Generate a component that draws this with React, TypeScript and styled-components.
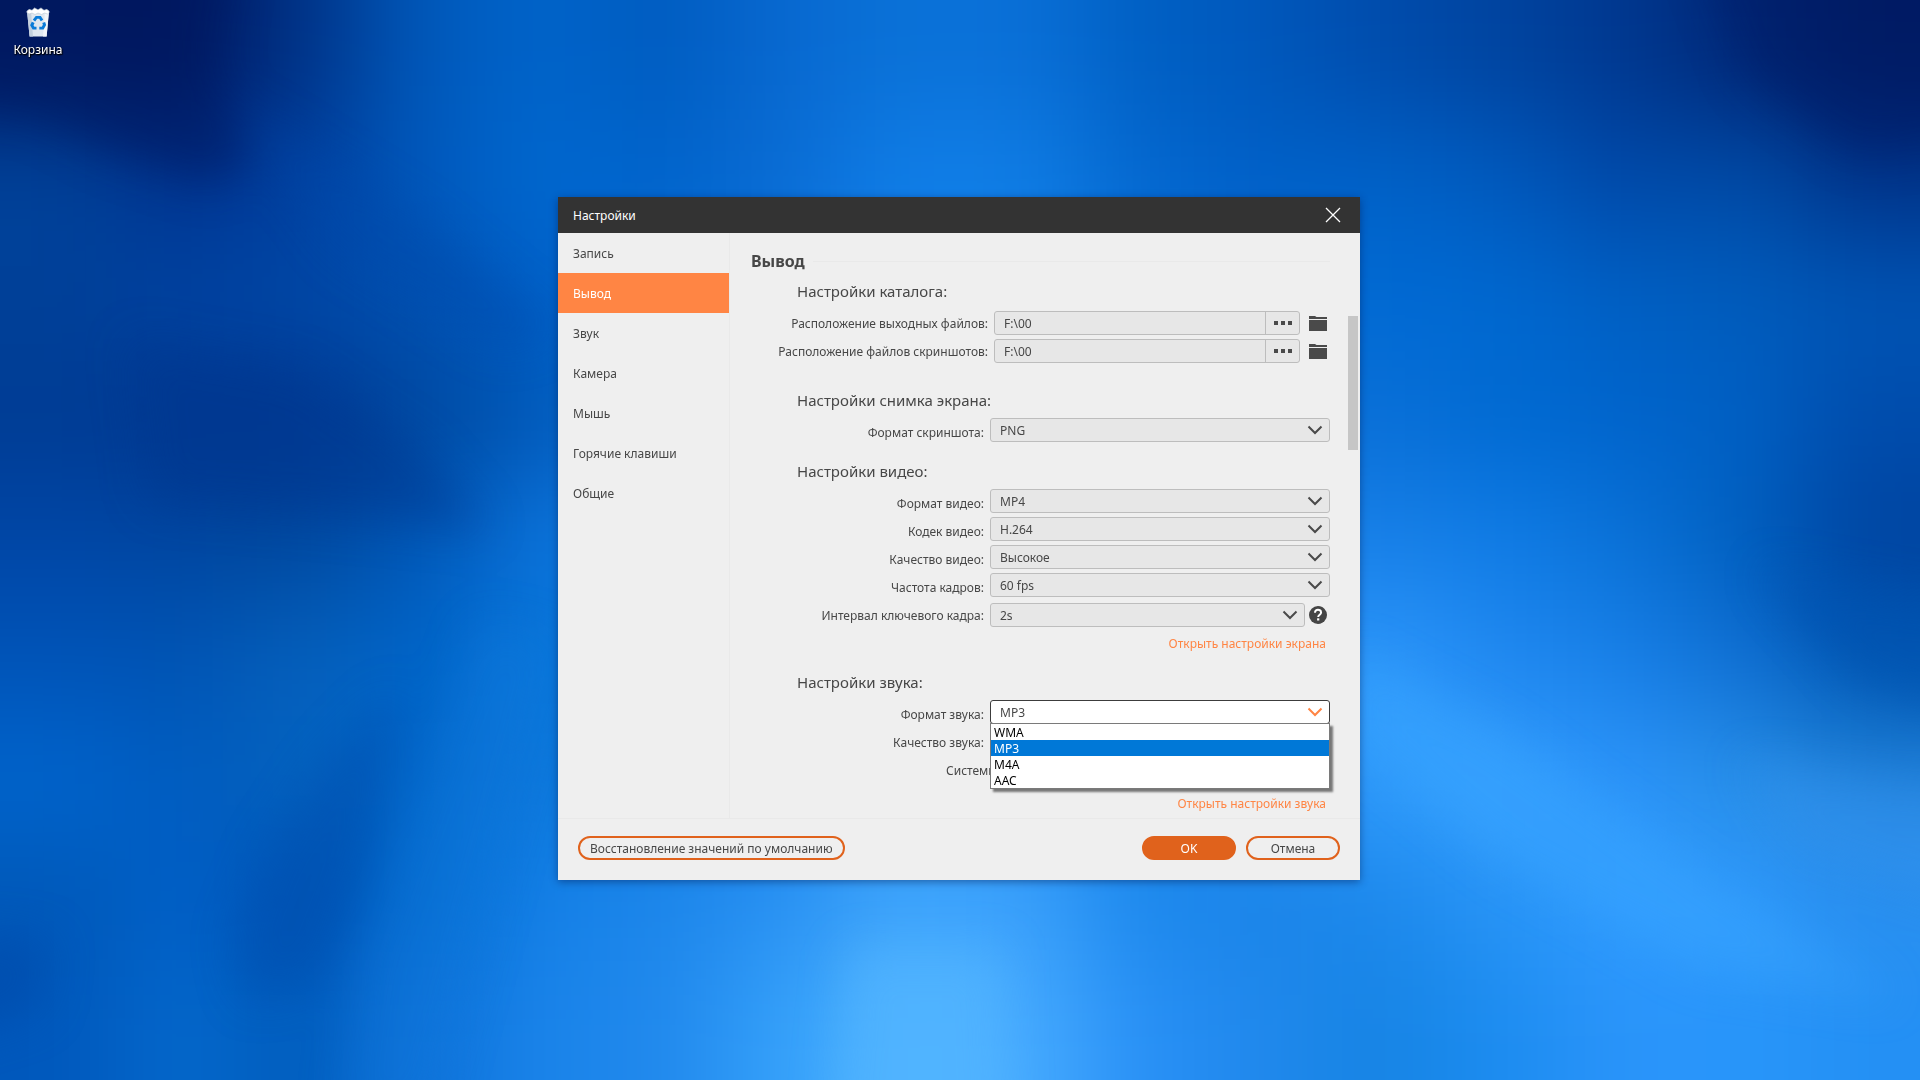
import React, { useId, useState } from "react";
import styled, { createGlobalStyle, css } from "styled-components";

const colors = {
  window: "#efefef",
  titleBar: "#333333",
  text: "#474747",
  accent: "#ff8544",
  accentStrong: "#e0621c",
  field: "#e7e7e7",
  fieldBorder: "#bdbdbd",
  line: "#e9e9e9",
  icon: "#4a4a4a",
};

const fontStack = `"Noto Sans", "Open Sans", sans-serif`;

const GlobalStyle = createGlobalStyle`
  *, *::before, *::after { box-sizing: border-box; }
  html, body { margin: 0; }
  body { background: #0a62cc; color: ${colors.text}; font: 12px/16px ${fontStack}; }
  button, input, select { font: inherit; color: inherit; margin: 0; }
`;

const Desktop = styled.main`
  position: relative;
  isolation: isolate;
  overflow: hidden;
  min-height: 100vh;
  display: grid;
  place-items: center;
  padding: 0 2px 3px 0;
`;

const WallpaperSvg = styled.svg`
  position: absolute;
  inset: 0;
  z-index: -1;
  width: 100%;
  height: 100%;
`;

const Shortcut = styled.button`
  position: absolute;
  top: 6px;
  left: 0;
  width: 76px;
  padding: 0;
  border: 0;
  background: none;
  display: flex;
  flex-direction: column;
  align-items: center;
  gap: 4px;
  color: #fff;
  text-shadow: 0 1px 2px #000, 1px 1px 1px #000;
`;

const Dialog = styled.section`
  width: min(802px, 100%);
  display: flex;
  flex-direction: column;
  background: ${colors.window};
  box-shadow: 0 2px 8px rgba(0, 20, 70, 0.45);
`;

const TitleBar = styled.header`
  height: 36px;
  padding: 0 17px 0 15px;
  display: flex;
  align-items: center;
  justify-content: space-between;
  background: ${colors.titleBar};
  color: #fff;
`;

const WindowTitle = styled.h1`
  margin: 0;
  padding-top: 2px;
  font-size: 12px;
  line-height: 16px;
  font-weight: 400;
`;

const IconButton = styled.button`
  padding: 0;
  border: 0;
  background: none;
  display: flex;
  cursor: pointer;
`;

const Body = styled.div`
  display: flex;
`;

const Sidebar = styled.nav`
  flex: none;
  width: 172px;
  border-right: 1px solid ${colors.line};
  display: flex;
  flex-direction: column;
`;

const NavItem = styled.button<{ $active: boolean }>`
  height: 40px;
  padding: 2px 15px 0;
  border: 0;
  text-align: left;
  background: ${(p) => (p.$active ? colors.accent : "transparent")};
  color: ${(p) => (p.$active ? "#fff" : colors.text)};
`;

const Panel = styled.div`
  flex: 1;
  min-width: 0;
  padding: 16px 18px 6px 21px;
`;

const PanelHeading = styled.div`
  display: flex;
  align-items: center;
  gap: 8px;
  margin-bottom: 6px;

  &::after {
    content: "";
    flex: 1;
    border-top: 1px solid ${colors.line};
  }
`;

const PanelTitle = styled.h2`
  margin: 0;
  font-size: 16px;
  line-height: 24px;
`;

const Section = styled.section<{ $spaceAbove?: number; $titleGap?: number }>`
  display: flex;
  flex-direction: column;
  gap: 4px;
  margin-top: ${(p) => p.$spaceAbove ?? 0}px;

  > h3 {
    margin: 0 0 ${(p) => p.$titleGap ?? 2}px;
    padding-left: 46px;
    font-size: 15px;
    line-height: 24px;
    font-weight: 400;
  }
`;

const FieldRow = styled.div<{ $wide?: boolean; $spaced?: boolean }>`
  display: grid;
  grid-template-columns: ${(p) => (p.$wide ? 237 : 233)}px 1fr;
  column-gap: 6px;
  align-items: center;
  min-height: 24px;
  margin-top: ${(p) => (p.$spaced ? 2 : 0)}px;
`;

const FieldLabel = styled.label<{ $lowered?: boolean; $start?: number }>`
  text-align: ${(p) => (p.$start ? "left" : "right")};
  white-space: nowrap;
  padding: ${(p) => (p.$lowered ? 6 : 2)}px 0 0 ${(p) => p.$start ?? 0}px;
`;

const Inline = styled.div<{ $gap: number; $end?: number }>`
  position: relative;
  display: flex;
  align-items: center;
  gap: ${(p) => p.$gap}px;
  padding-right: ${(p) => p.$end ?? 0}px;
`;

const box = css`
  height: 24px;
  border: 1px solid ${colors.fieldBorder};
  border-radius: 3px;
  background: ${colors.field};
`;

const PathBox = styled.div`
  ${box}
  flex: 1;
  min-width: 0;
  display: flex;
`;

const PathInput = styled.input`
  flex: 1;
  min-width: 0;
  padding: 2px 9px 0;
  border: 0;
  background: none;
  outline: 0;
`;

const BrowseButton = styled.button`
  width: 34px;
  padding: 0;
  border: 0;
  border-left: 1px solid ${colors.fieldBorder};
  background: none;
  display: grid;
  place-items: center;
`;

const SelectShell = styled.div`
  position: relative;
  flex: 1;
  min-width: 0;
  display: flex;
`;

const SelectBox = styled.select<{ $open?: boolean }>`
  ${box}
  width: 100%;
  padding: 2px 30px 0 9px;
  appearance: none;
  outline: 0;
  ${(p) =>
    p.$open &&
    css`
      background: #fff;
      border-color: #3c3c3c;
    `}
`;

const Chevron = styled.svg<{ $open?: boolean }>`
  position: absolute;
  top: 7px;
  right: 7px;
  pointer-events: none;
  color: ${(p) => (p.$open ? colors.accent : colors.icon)};
`;

const OptionList = styled.select`
  position: absolute;
  z-index: 2;
  top: 23px;
  left: 0;
  width: 100%;
  height: 66px;
  padding: 0;
  border: 1px solid #7a7a7a;
  border-radius: 0;
  outline: 0;
  overflow: hidden;
  background: #fff;
  color: #000;
  box-shadow: 3px 3px 2px rgba(0, 0, 0, 0.5);

  option {
    height: 16px;
    min-height: 16px;
    padding: 0 3px;
    line-height: 16px;
  }

  option:checked {
    background: linear-gradient(#0078d7, #0078d7);
    color: #fff;
  }
`;

const SettingsLink = styled.a<{ $above: number }>`
  align-self: flex-end;
  margin: ${(p) => p.$above}px 4px 0 0;
  color: ${colors.accent};
  text-decoration: none;
`;

const ScrollTrack = styled.div`
  flex: none;
  width: 12px;
  padding-top: 83px;
`;

const ScrollThumb = styled.div`
  width: 10px;
  height: 134px;
  background: #c6c6c6;
`;

const Footer = styled.footer`
  display: flex;
  gap: 10px;
  padding: 17px 20px 20px;
  border-top: 1px solid ${colors.line};
`;

const PillButton = styled.button<{ $primary?: boolean }>`
  min-width: 94px;
  height: 24px;
  padding: 2px 10px 0;
  border: 2px solid ${colors.accentStrong};
  border-radius: 12px;
  line-height: 16px;
  background: ${(p) => (p.$primary ? colors.accentStrong : "transparent")};
  color: ${(p) => (p.$primary ? "#fff" : colors.text)};
`;

const Spacer = styled.span`
  flex: 1;
`;

/* Colour swatches of the wallpaper, one row per 120 units of height. */
const swatches = [
  "001a62 001860 003286 0058ba 0064ca 005cc0 0868d0 0a72d8 0a70d8 0060c4 0058bc 004cac 0044a0 003890 002878 001c64",
  "00429a 003490 0040a0 0058bc 0068d0 0064cc 0a6cd4 107ee8 107ee6 0468d0 0060c8 0062c8 005abe 0048a8 004ca8 00348a",
  "004098 0042a0 0046a4 0050b0 0060c8 0668d0 0a70d8 107ee8 107ee6 0870d8 0668d2 006ad4 0068d0 0060c4 005cbc 0054b4",
  "003c94 003890 003892 00489f 0058b8 0a70d8 0a74dc 107ee8 107ee6 0a74dc 0a70d8 0a70d8 006ad2 0064cc 0060c4 004cac",
  "0046a6 0046a0 00489e 0058b8 0c74dc 0c76de 107ce4 1480e8 1480e8 107ce4 1480e8 1880e8 107ce6 0a72d8 0060c0 0044a0",
  "0054b8 0054b4 0560bc 0064c8 0674d8 0c78de 1480e6 1c88ee 1c88ee 1882ea 248cf2 2e98fc 2088f0 1880e8 1070d4 0058b4",
  "0064cc 005cc0 0462be 0064c8 0c78dc 147ee4 1c86ec 2c96f6 2c96f6 1c88ee 2890f4 309cfc 349eff 2c94fa 2890e8 2080d8",
  "0058b8 0060c8 0052b4 0068cc 1480e8 1c86ea 2890f2 40a6fc 3aa0fc 1c88ec 1a84e8 1c88ec 2894f6 309cff 2e98fc 2a90f0",
  "0058bc 0468cc 005cbc 0c70d8 1a84ea 2088ec 34a0fa 4eb2ff 48acff 2890f6 2088ec 1684e4 1c8cf0 2a94fa 2896fa 2490f4",
].map((row) => row.split(" "));

const cell = 120;
const bleed = 160;

function Wallpaper() {
  return (
    <WallpaperSvg viewBox="0 0 1920 1080" preserveAspectRatio="none" aria-hidden="true">
      <defs>
        <filter
          id="soft"
          filterUnits="userSpaceOnUse"
          x="-160"
          y="-160"
          width="2240"
          height="1400"
          colorInterpolationFilters="sRGB"
        >
          <feGaussianBlur stdDeviation="52" />
        </filter>
        <filter
          id="tight"
          filterUnits="userSpaceOnUse"
          x="-160"
          y="-160"
          width="2240"
          height="1400"
          colorInterpolationFilters="sRGB"
        >
          <feGaussianBlur stdDeviation="22" />
        </filter>
      </defs>
      <g filter="url(#soft)">
        {swatches.map((row, r) =>
          row.map((hex, c) => {
            const x = c === 0 ? -bleed : c * cell;
            const y = r === 0 ? -bleed : r * cell;
            const right = c === row.length - 1 ? 1920 + bleed : (c + 1) * cell + 1;
            const bottom = r === swatches.length - 1 ? 1080 + bleed : (r + 1) * cell + 1;
            return (
              <rect key={`${r}-${c}`} x={x} y={y} width={right - x} height={bottom - y} fill={`#${hex}`} />
            );
          })
        )}
      </g>
      <g filter="url(#tight)">
        <path d="M-80-80H240L215 60 250 160 210 185 110 150 40 115-80 95Z" fill="#00175e" opacity="0.45" />
        <path d="M230 100L420 220 560 330 500 350 340 250Z" fill="#0048aa" opacity="0.35" />
        <path d="M1690-80H2000V130L1860 155 1750 80Z" fill="#001864" opacity="0.4" />
        <path d="M130 340L300 370 420 450 490 530 330 515 150 500Z" fill="#00348c" opacity="0.4" />
        <path d="M400 690L330 760 270 850 235 940 250 1000 320 980 370 850Z" fill="#004eae" opacity="0.5" />
        <path d="M-60 930L50 940 40 1010-60 1040Z" fill="#0048a8" opacity="0.5" />
        <path d="M480 620L430 760 360 960 340 1120 430 1120 500 860 560 640Z" fill="#147ee2" opacity="0.3" />
        <path d="M1350 650L1500 730 1700 870 1900 1000 1700 970 1500 860 1350 740Z" fill="#3aa6ff" opacity="0.45" />
        <path d="M1760 570L1980 610V720L1860 680Z" fill="#0052b0" opacity="0.5" />
        <path d="M1740 760L1980 790V910L1800 850Z" fill="#3898f4" opacity="0.35" />
        <path d="M850 950H1000L1010 1150H830Z" fill="#56b8ff" opacity="0.5" />
      </g>
    </WallpaperSvg>
  );
}

function RecycleBinIcon() {
  return (
    <svg width="26" height="32" viewBox="0 0 26 34" preserveAspectRatio="none" aria-hidden="true">
      <path d="M2 5h22l-2.400 27.500H4.600Z" fill="#dfe7ef" />
      <path d="M2 5h4l2 27.500H4.600Z" fill="#c3d0dd" />
      <path d="M24 5h-4l-2 27.500h3.600Z" fill="#f2f5f8" />
      <path d="M1.500 6.500 4 3.500l3 1 2.500-2.500 3.500 2 3-2 3 2.500 3-1 2.500 3-2 2-3-1-3 1.500-3.500-1.500-3 1.500-3-1.500-3 1Z" fill="#fff" stroke="#b9c6d2" strokeWidth="0.600" />
      <g fill="none" stroke="#0a7bd8" strokeWidth="3">
        <path d="M9 15.500 11.500 12h3.500l2 3.300" />
        <path d="M18.700 17.500 19.500 20l-1.800 3.500h-3.400" />
        <path d="M11.500 23.500H8.500L6.800 20.500l1.400-3" />
      </g>
    </svg>
  );
}

function CloseIcon() {
  return (
    <svg width="20" height="20" viewBox="0 0 20 20" aria-hidden="true">
      <path d="M3 3 17 17M17 3 3 17" stroke="#fff" strokeWidth="1.300" />
    </svg>
  );
}

function DotsIcon() {
  return (
    <svg width="20" height="4" viewBox="0 0 20 4" fill={colors.icon} aria-hidden="true">
      <rect x="1" width="4" height="4" />
      <rect x="8" width="4" height="4" />
      <rect x="15" width="4" height="4" />
    </svg>
  );
}

function FolderIcon() {
  return (
    <svg width="18" height="16" viewBox="0 0 18 16" fill={colors.icon} aria-hidden="true">
      <path d="M0 1h6l1.500 1H18v2H0ZM0 5h18v11H0Z" />
    </svg>
  );
}

function HelpIcon() {
  return (
    <svg width="18" height="18" viewBox="0 0 18 18" aria-hidden="true">
      <circle cx="9" cy="9" r="9" fill="#454545" />
      <path d="M6 6.800C6 4.900 7.200 3.800 9 3.800s3.100 1.100 3.100 2.700c0 2.200-2.900 2.300-2.900 4.500" fill="none" stroke="#fff" strokeWidth="2" />
      <rect x="8.100" y="12.300" width="2.200" height="2.200" fill="#fff" />
    </svg>
  );
}

function PathField({ label, value }: { label: string; value: string }) {
  const id = useId();
  return (
    <FieldRow $wide>
      <FieldLabel htmlFor={id}>{label}</FieldLabel>
      <Inline $gap={9} $end={3}>
        <PathBox>
          <PathInput id={id} defaultValue={value} />
          <BrowseButton aria-label="Обзор">
            <DotsIcon />
          </BrowseButton>
        </PathBox>
        <IconButton aria-label="Открыть папку">
          <FolderIcon />
        </IconButton>
      </Inline>
    </FieldRow>
  );
}

type SelectFieldProps = {
  label: string;
  value?: string;
  open?: boolean;
  options?: string[];
  help?: boolean;
};

function SelectField({ label, value, open, options, help }: SelectFieldProps) {
  const id = useId();
  const [current, setCurrent] = useState(value);
  const items = options ?? (value ? [value] : []);
  const change = (e: React.ChangeEvent<HTMLSelectElement>) => setCurrent(e.target.value);
  return (
    <FieldRow $spaced={help}>
      <FieldLabel htmlFor={id} $lowered={!help}>
        {label}
      </FieldLabel>
      <Inline $gap={4} $end={help ? 3 : 0}>
        <SelectShell>
          <SelectBox id={id} $open={open} value={current} onChange={change}>
            {items.map((item) => (
              <option key={item}>{item}</option>
            ))}
          </SelectBox>
          <Chevron $open={open} width="16" height="10" viewBox="0 0 16 10" aria-hidden="true">
            <path d="M1.500 1.500 8 8l6.500-6.500" fill="none" stroke="currentColor" strokeWidth="2" />
          </Chevron>
          {open && (
            <OptionList size={4} aria-label={label} value={current} onChange={change}>
              {items.map((item) => (
                <option key={item}>{item}</option>
              ))}
            </OptionList>
          )}
        </SelectShell>
        {help && (
          <IconButton aria-label="Справка">
            <HelpIcon />
          </IconButton>
        )}
      </Inline>
    </FieldRow>
  );
}

const pages = ["Запись", "Вывод", "Звук", "Камера", "Мышь", "Горячие клавиши", "Общие"];

export default function App() {
  const [page, setPage] = useState("Вывод");
  return (
    <>
      <GlobalStyle />
      <Desktop>
        <Wallpaper />
        <Shortcut>
          <RecycleBinIcon />
          Корзина
        </Shortcut>
        <Dialog role="dialog" aria-labelledby="window-title">
          <TitleBar>
            <WindowTitle id="window-title">Настройки</WindowTitle>
            <IconButton aria-label="Закрыть">
              <CloseIcon />
            </IconButton>
          </TitleBar>
          <Body>
            <Sidebar>
              {pages.map((name) => (
                <NavItem key={name} $active={name === page} onClick={() => setPage(name)}>
                  {name}
                </NavItem>
              ))}
            </Sidebar>
            <Panel>
              <PanelHeading>
                <PanelTitle>Вывод</PanelTitle>
              </PanelHeading>
              <Section $titleGap={4}>
                <h3>Настройки каталога:</h3>
                <PathField label="Расположение выходных файлов:" value="F:\00" />
                <PathField label="Расположение файлов скриншотов:" value="F:\00" />
              </Section>
              <Section $spaceAbove={25}>
                <h3>Настройки снимка экрана:</h3>
                <SelectField label="Формат скриншота:" value="PNG" />
              </Section>
              <Section $spaceAbove={17}>
                <h3>Настройки видео:</h3>
                <SelectField label="Формат видео:" value="MP4" />
                <SelectField label="Кодек видео:" value="H.264" />
                <SelectField label="Качество видео:" value="Высокое" />
                <SelectField label="Частота кадров:" value="60 fps" />
                <SelectField label="Интервал ключевого кадра:" value="2s" help />
                <SettingsLink href="#screen" $above={5}>
                  Открыть настройки экрана
                </SettingsLink>
              </Section>
              <Section $spaceAbove={18}>
                <h3>Настройки звука:</h3>
                <SelectField
                  label="Формат звука:"
                  value="MP3"
                  options={["WMA", "MP3", "M4A", "AAC"]}
                  open
                />
                <SelectField label="Качество звука:" />
                <FieldRow>
                  <FieldLabel as="span" $lowered $start={195}>
                    Системный
                  </FieldLabel>
                </FieldRow>
                <SettingsLink href="#sound" $above={12}>
                  Открыть настройки звука
                </SettingsLink>
              </Section>
            </Panel>
            <ScrollTrack>
              <ScrollThumb />
            </ScrollTrack>
          </Body>
          <Footer>
            <PillButton>Восстановление значений по умолчанию</PillButton>
            <Spacer />
            <PillButton $primary>OK</PillButton>
            <PillButton>Отмена</PillButton>
          </Footer>
        </Dialog>
      </Desktop>
    </>
  );
}
